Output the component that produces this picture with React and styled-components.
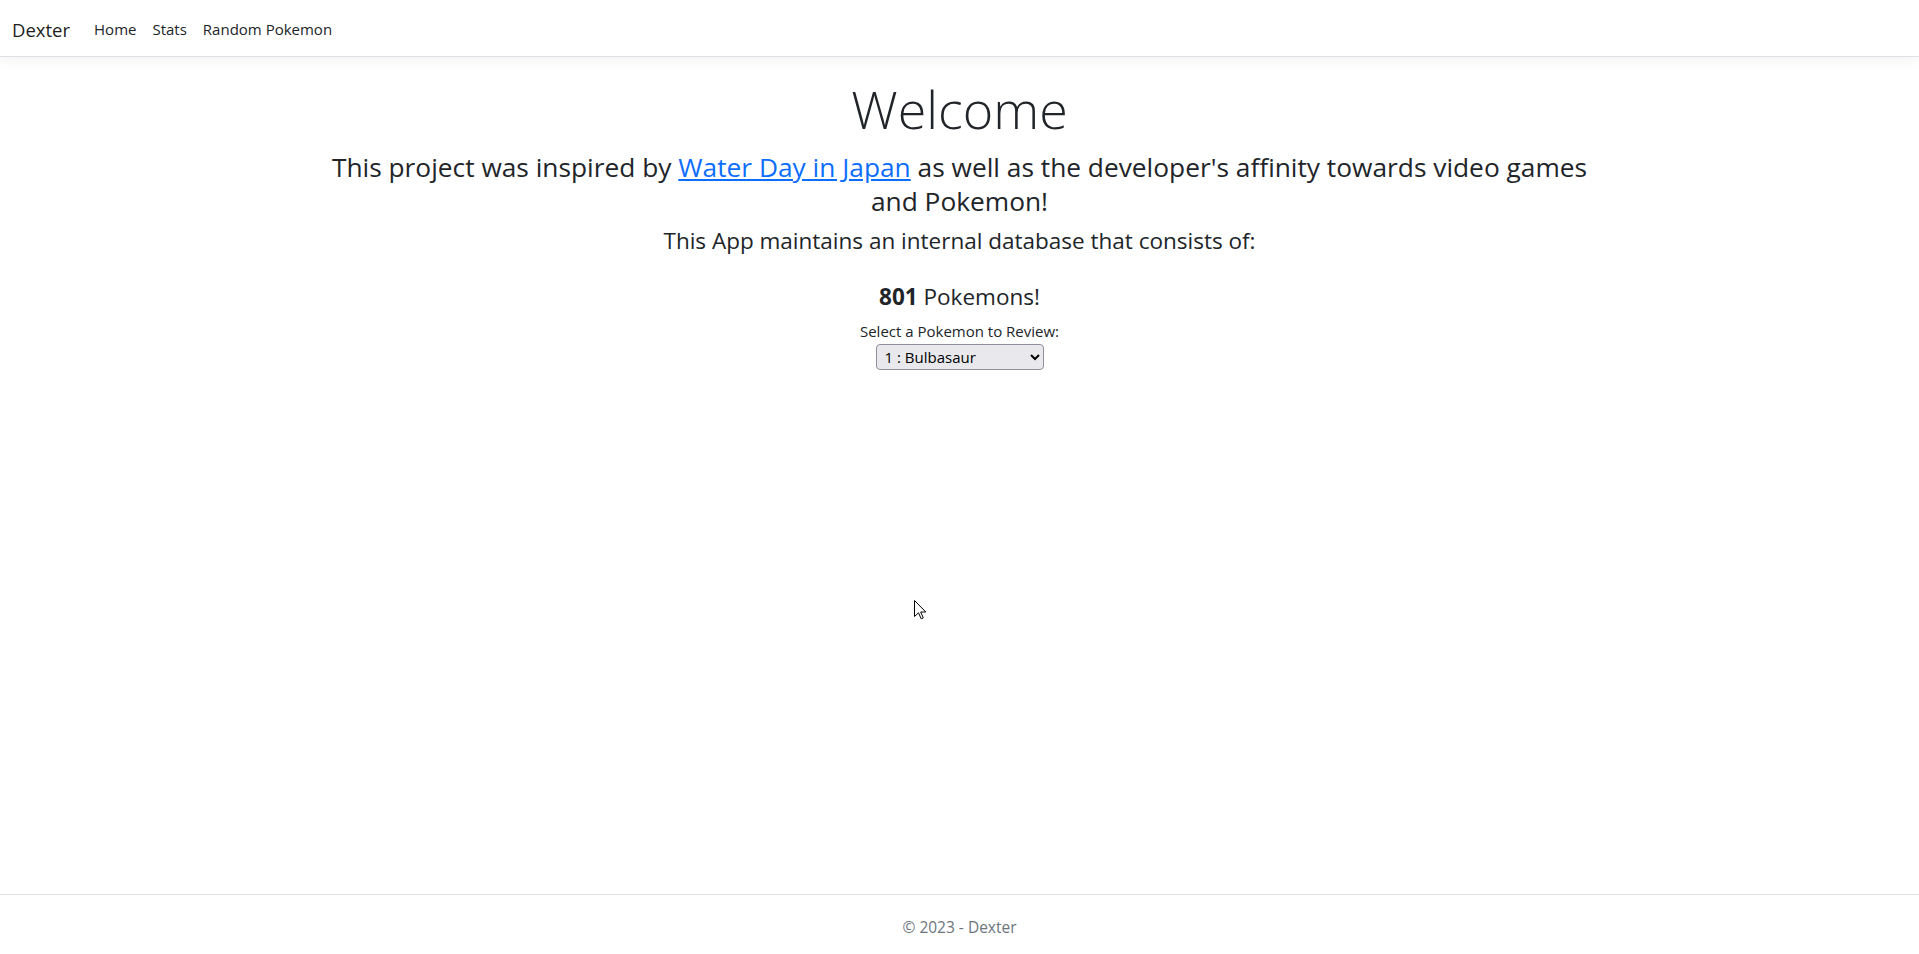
import React from "react";
import styled, { createGlobalStyle } from "styled-components";

const GlobalStyle = createGlobalStyle`
  *, *::before, *::after { box-sizing: border-box; }
  html, body { margin: 0; padding: 0; background: #fff; }
  body {
    font-family: "Open Sans", "Noto Sans", Roboto, sans-serif;
    font-size: 15px;
    line-height: 24px;
    color: #212529;
    overflow: hidden;
  }
`;

const Page = styled.div`
  display: flex;
  flex-direction: column;
  min-height: 100vh;
  position: relative;
`;

const NavBar = styled.header`
  display: flex;
  align-items: center;
  padding: 8px 12px;
  background: #fff;
  border-bottom: 1px solid #dee2e6;
  box-shadow: 0 4px 12px rgba(0, 0, 0, 0.05);
  margin-bottom: 16px;
`;

const Brand = styled.a`
  font-size: 18.5px;
  line-height: 30px;
  padding: 7px 0 3px;
  margin-right: 16px;
  color: rgba(0, 0, 0, 0.9);
  text-decoration: none;
`;

const NavList = styled.nav`
  display: flex;
  align-items: center;
`;

const NavLink = styled.a`
  display: block;
  padding: 9px 8px 7px;
  font-size: 15px;
  line-height: 24px;
  color: #212529;
  text-decoration: none;
`;

const Main = styled.main`
  flex: 1;
  width: 100%;
  max-width: 1320px;
  margin: 0 auto;
  padding: 0 12px;
  text-align: center;
`;

const Title = styled.h1`
  margin: 2px 0 9px;
  font-size: 52px;
  font-weight: 300;
  line-height: 67px;
`;

const Heading = styled.h2`
  margin: ${(p) => p.$top || 0}px 0 ${(p) => p.$bottom ?? 8}px;
  font-size: ${(p) => p.$size}px;
  font-weight: 400;
  line-height: ${(p) => p.$lh}px;
`;

const ExtLink = styled.a`
  color: #0d6efd;
  text-decoration: underline;
`;

const Label = styled.label`
  display: block;
  font-size: 15px;
  line-height: 24px;
`;

const Picker = styled.select`
  display: block;
  margin: 1px auto 0;
  width: 168px;
  height: 26px;
  padding: 0 4px;
  font-family: inherit;
  font-size: 15px;
  color: #000;
  background: #e9e9ed;
  border: 1px solid #8f8f9d;
  border-radius: 4px;
`;

const Footer = styled.footer`
  border-top: 1px solid #dee2e6;
  padding-top: 5px;
  line-height: 54px;
  font-size: 15.5px;
  text-align: center;
  color: #6c757d;
  white-space: nowrap;
`;

const Cursor = styled.svg`
  position: absolute;
  left: 914px;
  top: 600px;
  pointer-events: none;
`;

export default function App() {
  return (
    <Page>
      <GlobalStyle />
      <NavBar>
        <Brand href="#">Dexter</Brand>
        <NavList>
          <NavLink href="#">Home</NavLink>
          <NavLink href="#">Stats</NavLink>
          <NavLink href="#">Random Pokemon</NavLink>
        </NavList>
      </NavBar>
      <Main>
        <Title>Welcome</Title>
        <Heading $size={26.3} $lh={33.6} $bottom={9}>
          This project was inspired by <ExtLink href="#">Water Day in Japan</ExtLink> as well as the developer's affinity towards video games and Pokemon!
        </Heading>
        <Heading $size={22.5} $lh={28.8}>This App maintains an internal database that consists of:</Heading>
        <Heading $size={22.5} $lh={28.8} $top={27} $bottom={7}>
          <strong>801</strong> Pokemons!
        </Heading>
        <Label htmlFor="pokemon">Select a Pokemon to Review:</Label>
        <Picker id="pokemon" defaultValue="1">
          <option value="1">1 : Bulbasaur</option>
          <option value="2">2 : Ivysaur</option>
          <option value="3">3 : Venusaur</option>
        </Picker>
      </Main>
      <Footer>© 2023 - Dexter</Footer>
      <Cursor width="13" height="20" viewBox="0 0 13 20">
        <path d="M0.5 0.5 L0.5 16.5 L4.5 12.8 L7.2 18.8 L9.3 17.9 L6.7 12 L11.8 12 Z" fill="#fff" stroke="#000" strokeWidth="1" strokeLinejoin="miter" />
      </Cursor>
    </Page>
  );
}
